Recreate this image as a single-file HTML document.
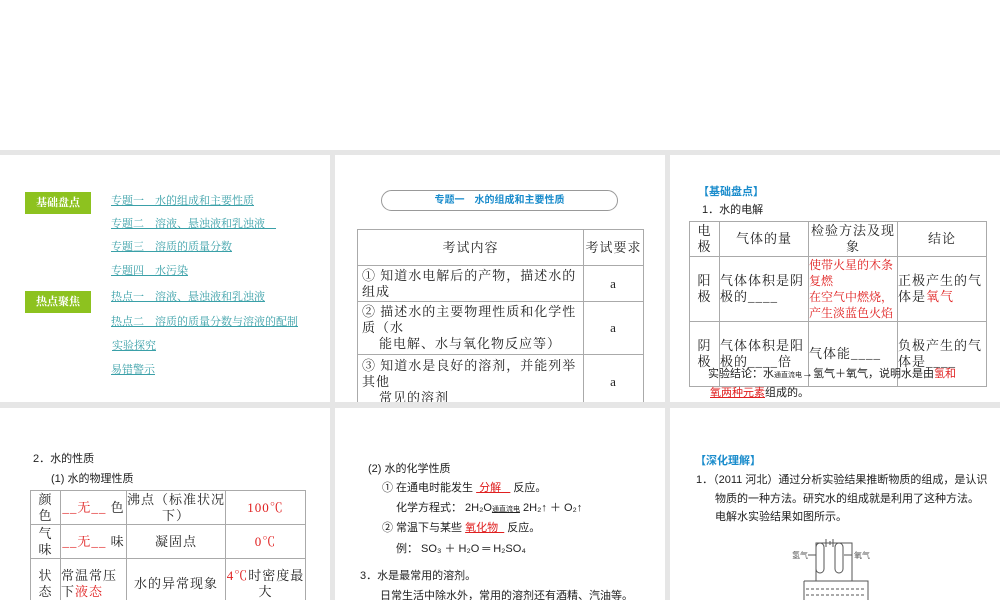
<!DOCTYPE html>
<html><head><meta charset="utf-8">
<style>
*{margin:0;padding:0;box-sizing:border-box}
body{width:1000px;height:600px;overflow:hidden;background:#fff;position:relative;font-family:"Liberation Serif","Noto Serif CJK SC","Noto Sans CJK SC",serif;color:#222}
.bg{position:absolute;left:0;top:150px;width:1000px;height:450px;background:#e6e6e6}
.s{position:absolute;background:#fff;overflow:hidden}
.a{position:absolute;white-space:nowrap}
.sans{font-family:"Liberation Sans","Noto Sans CJK SC",sans-serif}
.badge{position:absolute;left:25px;width:66px;height:22px;background:#8dc21f;color:#fff;font-size:11px;font-weight:bold;text-align:center;line-height:22px}
.lk{position:absolute;left:111px;font-size:11px;color:#3aa0a8;text-decoration:underline;white-space:nowrap}
table{position:absolute;border-collapse:collapse;table-layout:fixed}
td{border:1px solid #aaa;font-size:13px;vertical-align:middle;line-height:16px;letter-spacing:1px;overflow:hidden}
.v{text-align:center}
.r{color:#e02020}
.b{font-weight:bold}
.blue{color:#1a8ccc}
</style></head><body>
<div class="bg"></div>

<!-- slide 1 -->
<div class="s" style="left:0;top:155px;width:330px;height:247px">
<div class="badge" style="top:37px">基础盘点</div>
<div class="badge" style="top:136px">热点聚焦</div>
<div class="lk" style="top:37px">专题一　水的组成和主要性质</div>
<div class="lk" style="top:60px">专题二　溶液、悬浊液和乳浊液　</div>
<div class="lk" style="top:83px">专题三　溶质的质量分数</div>
<div class="lk" style="top:107px">专题四　水污染</div>
<div class="lk" style="top:133px">热点一　溶液、悬浊液和乳浊液</div>
<div class="lk" style="top:158px">热点二　溶质的质量分数与溶液的配制</div>
<div class="lk" style="top:182px;left:112px">实验探究</div>
<div class="lk" style="top:206px">易错警示</div>
</div>

<!-- slide 2 -->
<div class="s" style="left:335px;top:155px;width:330px;height:247px">
<div class="a sans b blue" style="left:46px;top:35px;width:237px;height:21px;border:1px solid #999;border-radius:11px;text-align:center;line-height:19px;font-size:10px">专题一　水的组成和主要性质</div>
<table style="left:22px;top:74px;width:287px">
<tr style="height:36px"><td style="width:226px;text-align:center">考试内容</td><td style="text-align:center">考试要求</td></tr>
<tr style="height:36px"><td style="padding-left:4px">①&nbsp;知道水电解后的产物，描述水的组成</td><td style="text-align:center">a</td></tr>
<tr style="height:53px"><td style="padding-left:4px">②&nbsp;描述水的主要物理性质和化学性质（水<br>&nbsp;&nbsp;&nbsp;&nbsp;能电解、水与氧化物反应等）</td><td style="text-align:center">a</td></tr>
<tr style="height:55px"><td style="padding-left:4px">③&nbsp;知道水是良好的溶剂，并能列举其他<br>&nbsp;&nbsp;&nbsp;&nbsp;常见的溶剂</td><td style="text-align:center">a</td></tr>
</table>
</div>

<!-- slide 3 -->
<div class="s" style="left:670px;top:155px;width:330px;height:247px">
<div class="a sans b blue" style="left:28px;top:28px;font-size:11px">【基础盘点】</div>
<div class="a sans" style="left:32px;top:46px;font-size:11px">1．水的电解</div>
<table style="left:19px;top:66px;width:298px">
<tr style="height:35px"><td class="v" style="width:30px">电<br>极</td><td style="width:89px;text-align:center">气体的量</td><td style="width:89px;text-align:center">检验方法及现象</td><td style="text-align:center">结论</td></tr>
<tr style="height:65px"><td class="v">阳<br>极</td><td>气体体积是阴极的____</td><td class="r" style="font-size:12px;letter-spacing:0">使带火星的木条复燃<br>在空气中燃烧，产生淡蓝色火焰</td><td>正极产生的气体是<span class="r">氧气</span></td></tr>
<tr style="height:65px"><td class="v">阴<br>极</td><td>气体体积是阳极的____倍</td><td>气体能____</td><td>负极产生的气体是____</td></tr>
</table>
<div class="a sans" style="left:38px;top:210px;font-size:11px">实验结论：水<span style="font-size:7px">通直流电</span>→氢气＋氧气，说明水是由<span class="r">氢和</span></div>
<div class="a sans" style="left:40px;top:229px;font-size:11px"><span class="r" style="text-decoration:underline">氧两种元素</span>组成的。</div>
</div>

<!-- slide 4 -->
<div class="s" style="left:0;top:408px;width:330px;height:192px">
<div class="a sans" style="left:33px;top:42px;font-size:11px">2．水的性质</div>
<div class="a sans" style="left:51px;top:62px;font-size:11px">(1) 水的物理性质</div>
<table style="left:30px;top:82px;width:276px">
<tr style="height:34px"><td class="v" style="width:30px">颜<br>色</td><td style="width:66px;text-align:center"><span class="r">__无__</span> 色</td><td style="width:99px;text-align:center">沸点（标准状况下）</td><td class="r" style="text-align:center">100℃</td></tr>
<tr style="height:34px"><td class="v">气<br>味</td><td style="text-align:center"><span class="r">__无__</span> 味</td><td style="text-align:center">凝固点</td><td class="r" style="text-align:center">0℃</td></tr>
<tr style="height:50px"><td class="v">状<br>态</td><td>常温常压下<span class="r">液态</span></td><td style="text-align:center">水的异常现象</td><td style="text-align:center"><span class="r">4℃</span>时密度最大</td></tr>
</table>
</div>

<!-- slide 5 -->
<div class="s sans" style="left:335px;top:408px;width:330px;height:192px;font-size:11px">
<div class="a" style="left:33px;top:52px">(2) 水的化学性质</div>
<div class="a" style="left:47px;top:71px">① 在通电时能发生 <span class="r" style="text-decoration:underline">&nbsp;分解&nbsp;&nbsp;&nbsp;</span> 反应。</div>
<div class="a" style="left:61px;top:91px">化学方程式： 2H₂O<span style="font-size:7px;text-decoration:underline">通直流电</span> 2H₂↑ ＋ O₂↑</div>
<div class="a" style="left:47px;top:111px">② 常温下与某些 <span class="r" style="text-decoration:underline">氧化物&nbsp;&nbsp;</span> 反应。</div>
<div class="a" style="left:61px;top:132px">例： SO₃ ＋ H₂O ═ H₂SO₄</div>
<div class="a" style="left:25px;top:159px">3．水是最常用的溶剂。</div>
<div class="a" style="left:45px;top:179px">日常生活中除水外，常用的溶剂还有酒精、汽油等。</div>
</div>

<!-- slide 6 -->
<div class="s sans" style="left:670px;top:408px;width:330px;height:192px;font-size:11px">
<div class="a b blue" style="left:25px;top:44px">【深化理解】</div>
<div class="a" style="left:26px;top:63px">1．（2011 河北）通过分析实验结果推断物质的组成，是认识</div>
<div class="a" style="left:45px;top:82px">物质的一种方法。研究水的组成就是利用了这种方法。</div>
<div class="a" style="left:45px;top:100px">电解水实验结果如图所示。</div>
<svg class="a" style="left:100px;top:125px" width="110" height="67" viewBox="0 0 110 67">
<g fill="none" stroke="#555" stroke-width="1">
<path d="M46 48V10H82V48"/>
<path d="M56 6v8M60 8v4M63 6v8"/>
<path d="M66 14V36a4 4 0 0 0 8 0V14a4 4 0 0 0-8 0Z" transform="translate(-20 0)"/>
<path d="M66 14V36a4 4 0 0 0 8 0V14a4 4 0 0 0-8 0Z" transform="translate(-1 0)"/>
<path d="M34 48H98V67M34 48V67"/>
<path d="M36 56H96M36 62H96" stroke-dasharray="3 2"/>
<path d="M38 22H46M74 22H82"/>
</g>
<text x="22" y="25" font-size="8" fill="#555">氢气</text>
<text x="84" y="25" font-size="8" fill="#555">氧气</text>
</svg>
</div>
</body></html>
